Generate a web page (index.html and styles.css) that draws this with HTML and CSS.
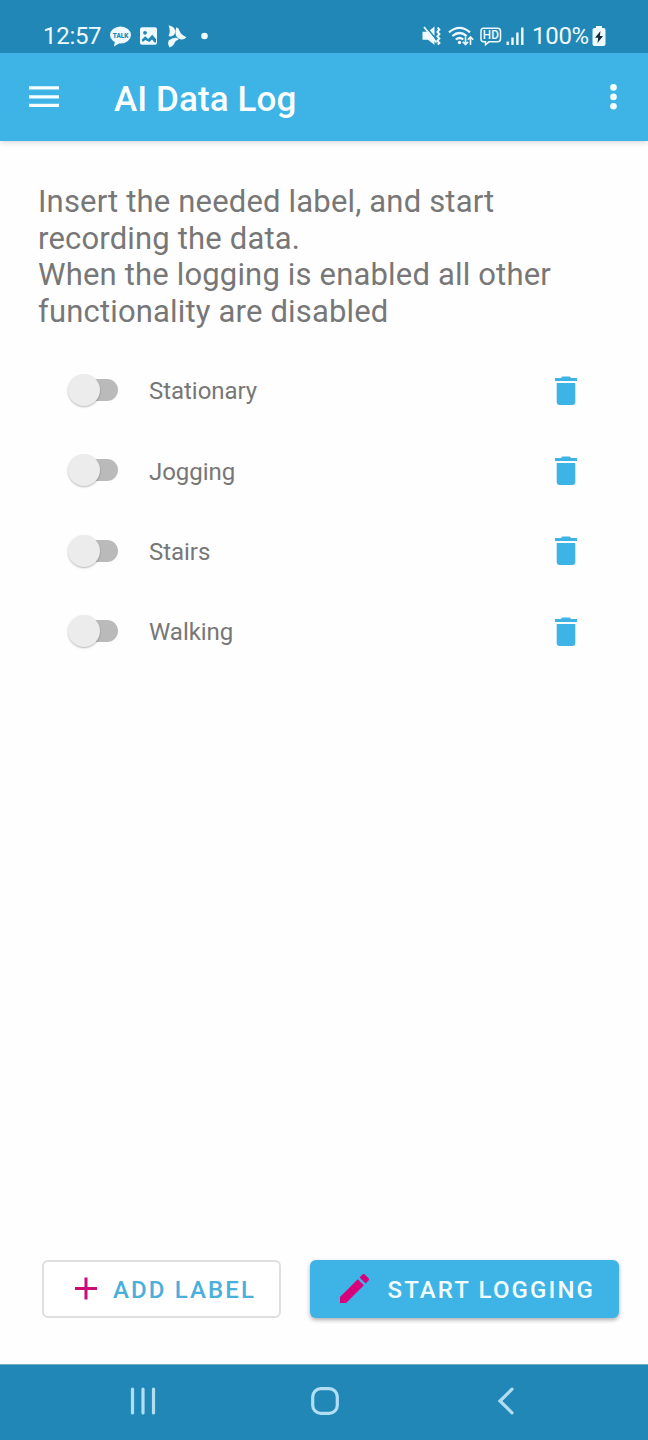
FILE: index.html
```html
<!DOCTYPE html>
<html lang="en">
<head>
<meta charset="utf-8">
<title>AI Data Log</title>
<link rel="stylesheet" href="styles.css">
</head>
<body>
<div class="screen">
  <div class="status">
    <span class="clock">12:57</span>
    <svg class="notifications" width="104" height="30" viewBox="0 0 104 30" fill="#effaff">
      <ellipse cx="12.500" cy="14" rx="10.500" ry="8.600"/>
      <path d="M7 20l-1 5.500 6.500-4z"/>
      <text class="talk" x="12.500" y="17" text-anchor="middle" textLength="15.500" lengthAdjust="spacingAndGlyphs">TALK</text>
      <rect x="32" y="6.200" width="17" height="17.600" rx="2"/>
      <circle cx="37" cy="11.800" r="1.900" fill="#2087b7"/>
      <path fill="#2087b7" d="M33.700 18.800l3.500-3.500 3 2.800 4-4.300 3.800 4.200v3.400h-1.500l-2.500-3-2.600 2.600-4.200-2-2.500 1.900z"/>
      <path d="M60.500 4.200q5.500 1 6.700 5.300.3 2.500-1.200 4.600-2.600 2-5.500.9 2.500-5 0-10.800zM68.300 6.300q2.700 1 3.200 3.400 1 3.600 6.900 6.600-2.600 2.800-6.100 2-4.200-1.500-4.700-5.300-.4-3.500.7-6.700zM60.700 19.500q3.800-3.200 8.300-2.600l1.800 1.500q-4 1.300-4.600 4.400-1.500 3-4.500 3.600-2.500-3.200-1-6.900z"/>
      <circle cx="96.500" cy="15" r="3.300"/>
    </svg>
    <svg class="signals" width="106" height="30" viewBox="0 0 106 30" fill="none" stroke="#effaff">
      <g transform="translate(1 0)">
      <path fill="#effaff" stroke="none" d="M1.500 10.700h5.500l6.500-5.200v18.500l-6.500-5.200H1.500z"/>
      <path stroke="#2087b7" stroke-width="1.600" d="M4.500 5.500l14 16.500"/>
      <path stroke-width="1.800" d="M3 6l12.500 15.500"/>
      <path stroke-width="2" d="M16.700 6.500l1.700 2.200-2 2.200 2 2.200-2 2.200 2 2.200-2 2.200 2 2.200-1.700 1.500"/>
      </g>
      <path stroke-width="2.200" d="M29 11.300q10.500-9 21 0M32.300 15q7.200-6 14.400 0M35.700 18.500q3.800-3 7.600 0"/>
      <circle cx="39.500" cy="21.500" r="1.700" fill="#effaff" stroke="none"/>
      <path stroke-width="1.600" d="M45.500 15.500v8m-2.700-2.700 2.700 2.700 2.700-2.700M50.500 24v-8m-2.700 2.700 2.700-2.700 2.700 2.700"/>
      <g transform="translate(-1 0)">
      <path stroke-width="1.500" d="M64.500 7.200h14q3 0 3 3v7.600q0 3-3 3h-8.500l-3.500 2.800v-2.800h-2q-2.500 0-2.500-3v-7.600q0-3 2.500-3z"/>
      <text class="hd" x="71.800" y="18.200" text-anchor="middle" textLength="16" lengthAdjust="spacingAndGlyphs">HD</text>
      <path stroke-width="2.400" d="M88.700 20.500v3.500M93.500 16.500v7.500M98.400 11.500v12.500M103.300 6.500v17.500"/>
      </g>
    </svg>
    <span class="percent">100%</span>
    <svg class="battery" width="14" height="22" viewBox="0 0 14 22"><path fill="#effaff" d="M4 3V1h6v2h1.500q2 0 2 2v14q0 2-2 2h-9q-2 0-2-2V5q0-2 2-2z"/><path fill="#102c3a" d="M8.500 6 3 12.700h3.200L5.500 18 11 11H7.800z"/></svg>
  </div>
  <header class="appbar">
    <svg class="menu" width="30" height="22" viewBox="0 0 30 22" fill="#f6feff"><path d="M0 .3h30v3.200H0zM0 9.200h30v3.200H0zM0 17.800h30V21H0z"/></svg>
    <h1 class="title">AI Data Log</h1>
    <svg class="more" width="8" height="28" viewBox="0 0 8 28" fill="#f6feff"><circle cx="4.500" cy="4.400" r="3.300"/><circle cx="4.500" cy="13.900" r="3.300"/><circle cx="4.500" cy="23.300" r="3.300"/></svg>
  </header>
  <main class="content">
    <p class="intro">Insert the needed label, and start<br>recording the data.<br>When the logging is enabled all other<br>functionality are disabled</p>
    <ul class="labels">
      <li class="row"><span class="switch"><i class="thumb"></i></span><span class="name">Stationary</span><svg class="trash" width="24" height="30" viewBox="0 0 24 30"><path d="M1 2h6l1.300-1.500h7.400L17 2h6v3H1zM2.700 7h18.600v19q0 3-3 3H5.700q-3 0-3-3z"/></svg></li>
      <li class="row"><span class="switch"><i class="thumb"></i></span><span class="name">Jogging</span><svg class="trash" width="24" height="30" viewBox="0 0 24 30"><path d="M1 2h6l1.300-1.500h7.400L17 2h6v3H1zM2.700 7h18.600v19q0 3-3 3H5.700q-3 0-3-3z"/></svg></li>
      <li class="row"><span class="switch"><i class="thumb"></i></span><span class="name">Stairs</span><svg class="trash" width="24" height="30" viewBox="0 0 24 30"><path d="M1 2h6l1.300-1.500h7.400L17 2h6v3H1zM2.700 7h18.600v19q0 3-3 3H5.700q-3 0-3-3z"/></svg></li>
      <li class="row"><span class="switch"><i class="thumb"></i></span><span class="name">Walking</span><svg class="trash" width="24" height="30" viewBox="0 0 24 30"><path d="M1 2h6l1.300-1.500h7.400L17 2h6v3H1zM2.700 7h18.600v19q0 3-3 3H5.700q-3 0-3-3z"/></svg></li>
    </ul>
    <div class="actions">
      <button class="btn add"><svg width="22" height="23" viewBox="0 0 22 23"><path fill="#cb0b78" d="M9.500 .5h3V10H22v3h-9.500v9.500h-3V13H0v-3h9.500z"/></svg><span>ADD LABEL</span></button>
      <button class="btn start"><svg width="29" height="29" viewBox="3 3 18 18"><path fill="#d8007b" d="M3 17.250V21h3.750L17.810 9.940l-3.750-3.750L3 17.250zM20.710 7.040a1 1 0 0 0 0-1.410l-2.340-2.340a1 1 0 0 0-1.410 0l-1.830 1.830 3.750 3.750 1.830-1.830z"/></svg><span>START LOGGING</span></button>
    </div>
  </main>
  <nav class="navbar">
    <svg width="28" height="28" viewBox="0 0 28 28"><path d="M3.500 2v24M14 2v24M24.500 2v24"/></svg>
    <svg width="28" height="28" viewBox="0 0 28 28"><rect x="1.700" y="1.700" width="24.600" height="24.600" rx="8"/></svg>
    <svg width="28" height="28" viewBox="0 0 28 28"><path d="M20 2.200 8 14l12 11.800"/></svg>
  </nav>
</div>
</body>
</html>
```
FILE: styles.css
```css
* { box-sizing: border-box; }
body { margin: 0; font-family: Roboto, "Liberation Sans", sans-serif; background: #fff; }
svg { display: block; flex: none; }
.screen { width: 648px; height: 1440px; display: flex; flex-direction: column; overflow: hidden; background: #fefefe; }
.status { position: relative; z-index: 2; height: 53px; background: #2087b7; display: flex; align-items: center; padding: 19px 42px 0 43px; color: #effaff; font-size: 24px; }
.clock { width: 58px; line-height: 34px; white-space: nowrap; letter-spacing: -.3px; }
.notifications { margin-left: 7px; }
.signals { margin-left: 208px; }
.percent { margin-left: 6px; width: 58px; line-height: 34px; white-space: nowrap; letter-spacing: -.3px; }
.battery { margin-left: 2px; }
.talk { font-size: 7.500px; font-weight: 900; fill: #2087b7; }
.hd { font-size: 12.500px; font-weight: 500; fill: #effaff; stroke: none; }
.appbar { position: relative; z-index: 1; height: 88px; background: #3db3e6; display: flex; align-items: center; padding: 0 31px 0 29px; box-shadow: 0 1px 6px rgba(0,0,0,.18); color: #fbffff; }
.title { margin: 5px 0 0 55px; flex: 1; font-size: 35px; line-height: 42px; font-weight: 500; letter-spacing: .1px; }
.content { flex: 1; display: flex; flex-direction: column; }
.intro { margin: 43px 0 0 38px; font-size: 31px; line-height: 36.600px; letter-spacing: .17px; color: #777; white-space: nowrap; }
.labels { list-style: none; margin: 19.500px 0 0; padding: 0; }
.row { height: 80.400px; display: flex; align-items: center; padding: 0 70px 0 68px; }
.switch { width: 50px; height: 32px; display: flex; align-items: center; }
.switch::after { content: ""; width: 34px; height: 22px; margin-left: -16px; border-radius: 0 11px 11px 0; background: #bababa; }
.thumb { width: 32px; height: 32px; flex: none; border-radius: 50%; background: #ececec; box-shadow: 0 1px 2px rgba(0,0,0,.28); position: relative; z-index: 1; }
.name { margin: 2.500px 0 0 31px; flex: 1; font-size: 24px; line-height: 30px; letter-spacing: -.04px; color: #777; }
.trash { margin-top: 1px; fill: #3db3e6; }
.actions { margin-top: auto; padding: 0 29px 46px 42px; display: flex; justify-content: space-between; }
.btn { height: 58px; display: flex; align-items: center; border: 0; border-radius: 6px; padding: 0; font: 500 24px/30px Roboto, "Liberation Sans", sans-serif; letter-spacing: 2.130px; white-space: nowrap; }
.btn span { margin-top: 2px; }
.btn svg { margin-bottom: 1px; }
.add { width: 239px; border: 2px solid #dfdfdf; background: #fff; color: #4aafda; padding-left: 31px; gap: 16px; }
.start { width: 309px; background: #3db3e6; color: #f3fdff; padding-left: 30px; gap: 18.500px; box-shadow: 0 2px 4px rgba(0,0,0,.32); }
.navbar { height: 76px; background: #2087b7; border-top: 1px solid #72abc4; display: flex; align-items: center; justify-content: space-between; padding: 0 128px 4px 129px; }
.navbar svg { fill: none; stroke: #b2def2; stroke-width: 3.200; stroke-linecap: round; }
```
